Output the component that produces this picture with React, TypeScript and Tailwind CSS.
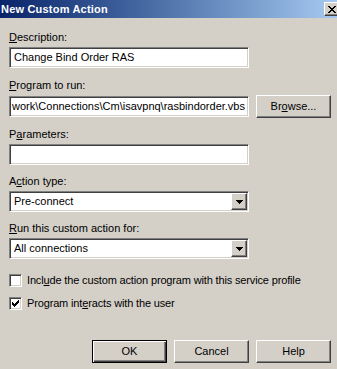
import React from "react";

const Px = ({ rows, color = "#000" }: { rows: string[]; color?: string }) => (
  <svg width={rows[0].length} height={rows.length} shapeRendering="crispEdges" className="block">
    {rows.flatMap((r, y) =>
      r.split("").map((c, x) =>
        c === "x" ? <rect key={`${x}-${y}`} x={x} y={y} width={1} height={1} fill={color} /> : null
      )
    )}
  </svg>
);

const sunken =
  "border border-t-[#808080] border-l-[#808080] border-b-white border-r-white shadow-[inset_1px_1px_0_#404040,inset_-1px_-1px_0_#d4d0c8] bg-white";
const raised =
  "border border-t-white border-l-white border-b-[#404040] border-r-[#404040] shadow-[inset_-1px_-1px_0_#808080,inset_1px_1px_0_#d4d0c8] bg-[#d4d0c8]";

function Btn({ children, def = false }: { children: React.ReactNode; def?: boolean }) {
  return (
    <div
      className={
        def
          ? "w-[75px] h-[23px] flex items-center justify-center border border-black shadow-[inset_1px_1px_0_#fff,inset_-1px_-1px_0_#404040,inset_-2px_-2px_0_#808080] bg-[#d4d0c8]"
          : `w-[75px] h-[23px] flex items-center justify-center ${raised}`
      }
    >
      {children}
    </div>
  );
}

function Select({ value }: { value: string }) {
  return (
    <div className={`mt-[3px] w-[240px] h-[21px] flex items-center ${sunken} p-[1px]`}>
      <span className="flex-1 pl-[3px]">{value}</span>
      <div className={`w-[16px] h-[17px] flex items-center justify-center ${raised}`}>
        <Px rows={["xxxxxxx", ".xxxxx.", "..xxx..", "...x..."]} />
      </div>
    </div>
  );
}

export default function App() {
  return (
    <div className="w-[337px] h-[369px] bg-[#d4d0c8] overflow-hidden font-['Liberation_Sans',Arial,sans-serif] text-[11px] leading-[13px] text-black">
      <div className="h-[18px] flex items-center justify-between bg-gradient-to-r from-[#0a246a] to-[#a6caf0]">
        <span className="pl-[1px] font-bold text-white text-[11px] tracking-[0.2px]">New Custom Action</span>
        <div className={`w-[16px] h-[14px] -mr-[3px] flex items-center justify-center ${raised}`}>
          <Px
            rows={["xx....xx", ".xx..xx.", "..xxxx..", "...xx...", "..xxxx..", ".xx..xx.", "xx....xx"]}
          />
        </div>
      </div>

      <div className="pl-[9px]">
        <div className="mt-[13px] h-[13px]">
          <u>D</u>escription:
        </div>
        <div className={`mt-[3px] w-[240px] h-[21px] flex items-center pl-[4px] ${sunken}`}>
          Change Bind Order RAS
        </div>

        <div className="mt-[11px] h-[13px]">
          <u>P</u>rogram to run:
        </div>
        <div className="mt-[3px] flex items-center">
          <div className={`w-[240px] h-[21px] flex items-center justify-end overflow-hidden pr-[3px] whitespace-nowrap ${sunken}`}>
            work\Connections\Cm\isavpnq\rasbindorder.vbs
          </div>
          <div className="ml-[7px]">
            <Btn>
              Br<u>o</u>wse...
            </Btn>
          </div>
        </div>

        <div className="mt-[10px] h-[13px]">
          P<u>a</u>rameters:
        </div>
        <div className={`mt-[3px] w-[240px] h-[21px] ${sunken}`} />

        <div className="mt-[10px] h-[13px]">
          A<u>c</u>tion type:
        </div>
        <Select value="Pre-connect" />

        <div className="mt-[10px] h-[13px]">
          <u>R</u>un this custom action for:
        </div>
        <Select value="All connections" />

        <div className="mt-[15px] flex items-center h-[13px]">
          <div className={`w-[13px] h-[13px] ${sunken}`} />
          <span className="ml-[5px] tracking-[-0.15px]">
            Incl<u>u</u>de the custom action program with this service profile
          </span>
        </div>
        <div className="mt-[10px] flex items-center h-[13px]">
          <div className={`w-[13px] h-[13px] ${sunken} flex items-center justify-center`}>
            <Px rows={["......x", ".....xx", "x...xxx", "xx.xxx.", "xxxxx..", ".xxx...", "..x...."]} />
          </div>
          <span className="ml-[5px] tracking-[-0.15px]">
            Program int<u>e</u>racts with the user
          </span>
        </div>
      </div>

      <div className="mt-[30px] flex justify-end gap-[7px] pr-[6px]">
        <Btn def>OK</Btn>
        <Btn>Cancel</Btn>
        <Btn>Help</Btn>
      </div>
    </div>
  );
}
